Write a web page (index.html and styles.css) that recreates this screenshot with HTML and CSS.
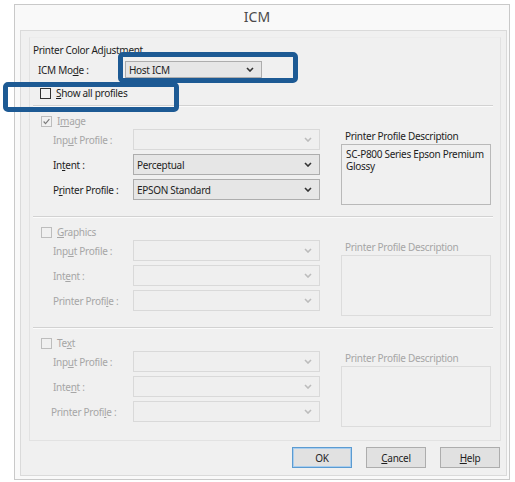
FILE: index.html
```html
<!DOCTYPE html>
<html>
<head>
<meta charset="utf-8">
<link rel="stylesheet" href="styles.css">
</head>
<body>
<div class="window">
  <div class="titlebar">ICM</div>
  <div class="panel">
    <div class="group">
      <div class="caption">Printer Color Adjustment</div>
      <div class="mode-row">
        <span class="mode-label">ICM Mo<u>d</u>e :</span>
        <div class="select mode-select"><span>Host ICM</span><svg class="chev" viewBox="0 0 8 5"><path d="M1 1 L4 4 L7 1"/></svg></div>
      </div>
      <div class="show-row"><span class="cb"></span><span class="cb-text"><u>S</u>how all profiles</span></div>
      <div class="sep"></div>
      <div class="sect">
        <div class="left">
          <div class="cb-row dis"><span class="cb checked"><svg viewBox="0 0 11 11"><path d="M2 5.5 L4.3 8 L9 2.5"/></svg></span><span class="cb-text">I<u>m</u>age</span></div>
          <div class="row dis"><span class="lbl">Inp<u>u</u>t Profile :</span><div class="select"><span></span><svg class="chev" viewBox="0 0 8 5"><path d="M1 1 L4 4 L7 1"/></svg></div></div>
          <div class="row on"><span class="lbl">In<u>t</u>ent :</span><div class="select"><span>Perceptual</span><svg class="chev" viewBox="0 0 8 5"><path d="M1 1 L4 4 L7 1"/></svg></div></div>
          <div class="row on"><span class="lbl">P<u>r</u>inter Profile :</span><div class="select"><span>EPSON Standard</span><svg class="chev" viewBox="0 0 8 5"><path d="M1 1 L4 4 L7 1"/></svg></div></div>
        </div>
        <div class="right on">
          <div class="desc-label">Printer Profile Description</div>
          <div class="desc-box">SC-P800 Series Epson Premium Glossy</div>
        </div>
      </div>
      <div class="sep"></div>
      <div class="sect">
        <div class="left">
          <div class="cb-row dis"><span class="cb"></span><span class="cb-text"><u>G</u>raphics</span></div>
          <div class="row dis"><span class="lbl">Inp<u>u</u>t Profile :</span><div class="select"><span></span><svg class="chev" viewBox="0 0 8 5"><path d="M1 1 L4 4 L7 1"/></svg></div></div>
          <div class="row dis"><span class="lbl">Int<u>e</u>nt :</span><div class="select"><span></span><svg class="chev" viewBox="0 0 8 5"><path d="M1 1 L4 4 L7 1"/></svg></div></div>
          <div class="row dis"><span class="lbl">Printer Profi<u>l</u>e :</span><div class="select"><span></span><svg class="chev" viewBox="0 0 8 5"><path d="M1 1 L4 4 L7 1"/></svg></div></div>
        </div>
        <div class="right dis">
          <div class="desc-label">Printer Profile Description</div>
          <div class="desc-box"></div>
        </div>
      </div>
      <div class="sep"></div>
      <div class="sect">
        <div class="left">
          <div class="cb-row dis"><span class="cb"></span><span class="cb-text">Te<u>x</u>t</span></div>
          <div class="row dis"><span class="lbl">Inp<u>u</u>t Profile :</span><div class="select"><span></span><svg class="chev" viewBox="0 0 8 5"><path d="M1 1 L4 4 L7 1"/></svg></div></div>
          <div class="row dis"><span class="lbl">Inte<u>n</u>t :</span><div class="select"><span></span><svg class="chev" viewBox="0 0 8 5"><path d="M1 1 L4 4 L7 1"/></svg></div></div>
          <div class="row dis"><span class="lbl lbl-narrow">Printer Profi<u>l</u>e :</span><div class="select"><span></span><svg class="chev" viewBox="0 0 8 5"><path d="M1 1 L4 4 L7 1"/></svg></div></div>
        </div>
        <div class="right dis">
          <div class="desc-label">Printer Profile Description</div>
          <div class="desc-box"></div>
        </div>
      </div>
    </div>
    <div class="buttons">
      <div class="btn default">OK</div>
      <div class="btn"><u>C</u>ancel</div>
      <div class="btn"><u>H</u>elp</div>
    </div>
  </div>
</div>
<div class="callout callout-mode"></div>
<div class="callout callout-show"></div>
</body>
</html>
```

FILE: styles.css
```css
* { box-sizing: border-box; }
html, body { margin: 0; padding: 0; background: #ffffff; }
body {
  font-family: "Noto Sans", "Open Sans", sans-serif;
  font-size: 10px;
  letter-spacing: -0.3px;
  color: #1e1e1e;
  width: 515px;
  height: 482px;
  overflow: hidden;
}
u { text-decoration: underline; text-underline-offset: 1px; }

.window {
  margin: 4px 0 0 14px;
  width: 496px;
  height: 476px;
  border: 1px solid #c9c9c9;
  background: #f9f9f9;
  display: flex;
  flex-direction: column;
}
.titlebar {
  height: 25px;
  line-height: 24px;
  text-align: center;
  padding-right: 10px;
  font-size: 14px;
  letter-spacing: 0;
  color: #4a4a4a;
}
.panel {
  margin: 0 2px 0 5px;
  height: 446px;
  border: 1px solid #dadada;
  background: #f0f0f0;
  display: flex;
  flex-direction: column;
}
.group {
  margin: 6px 5px 0 8px;
  height: 404px;
  border: 1px solid #e2e2e2;
  border-top-color: #ececec;
  display: flex;
  flex-direction: column;
}
.caption {
  margin: 5px 0 0 3px;
  line-height: 14px;
  height: 14px;
  white-space: nowrap;
}
.mode-row {
  margin-top: 4px;
  display: flex;
  align-items: center;
  height: 17px;
  padding-left: 8px;
}
.mode-label { width: 87px; white-space: nowrap; }
.select {
  height: 17px;
  border: 1px solid #adadad;
  background: #e6e6e6;
  display: flex;
  align-items: center;
  justify-content: space-between;
  padding: 0 7px 0 3px;
  white-space: nowrap;
}
.mode-select { width: 137px; }
.chev { width: 8px; height: 5px; fill: none; stroke: #333; stroke-width: 1.6; }

.show-row {
  margin-top: 8px;
  height: 14px;
  display: flex;
  align-items: center;
  padding-left: 10px;
}
.cb {
  width: 11px;
  height: 11px;
  border: 1px solid #333;
  background: #f4f4f4;
  flex: none;
  display: flex;
  align-items: center;
  justify-content: center;
}
.cb svg { width: 11px; height: 11px; fill: none; stroke: #7a7a7a; stroke-width: 1.4; }
.cb-text { margin-left: 5px; white-space: nowrap; }

.sep {
  margin: 0 7px 0 3px;
  height: 2px;
  border-top: 1px solid #d2d2d2;
  border-bottom: 1px solid #fbfbfb;
}
.show-row + .sep { margin-top: 5px; }

.sect {
  height: 109px;
  padding: 7px 0 0 11px;
  display: grid;
  grid-template-columns: 279px 150px;
  column-gap: 21px;
  align-items: start;
}
.left { display: flex; flex-direction: column; }
.cb-row { height: 14px; display: flex; align-items: center; margin-bottom: 1px; }
.row {
  display: flex;
  align-items: center;
  height: 21px;
  margin-bottom: 4px;
}
.row .lbl { width: 92px; padding-left: 12px; white-space: nowrap; }
.row .lbl-narrow { padding-left: 10px; }
.row .select { width: 187px; height: 21px; }

.dis { color: #a6a6a6; }
.dis .cb { border-color: #bdbdbd; background: #f0f0f0; }
.dis .select { border-color: #d9d9d9; background: #efefef; }
.dis .chev { stroke: #bcbcbc; }

.right { padding-top: 15px; }
.desc-label { line-height: 14px; height: 14px; padding-left: 4px; white-space: nowrap; }
.desc-box {
  margin-top: 1px;
  height: 61px;
  border: 1px solid #b9b9b9;
  padding: 3px 4px 0 4px;
  line-height: 12px;
}
.dis .desc-box { border-color: #dcdcdc; }

.buttons {
  margin: 6px 6px 0 0;
  display: flex;
  justify-content: flex-end;
  gap: 14px;
}
.btn {
  width: 60px;
  height: 21px;
  border: 1px solid #adadad;
  background: #e1e1e1;
  display: flex;
  align-items: center;
  justify-content: center;
}
.btn.default { border: 1px solid #5b9bd1; box-shadow: inset 0 0 0 1px #a8cdee; }

.callout {
  position: absolute;
  border: 5px solid #1d5a94;
  border-radius: 5px;
}
.callout-mode { left: 118px; top: 52px; width: 180px; height: 31px; }
.callout-show { left: 3px; top: 82px; width: 176px; height: 30px; }
```
